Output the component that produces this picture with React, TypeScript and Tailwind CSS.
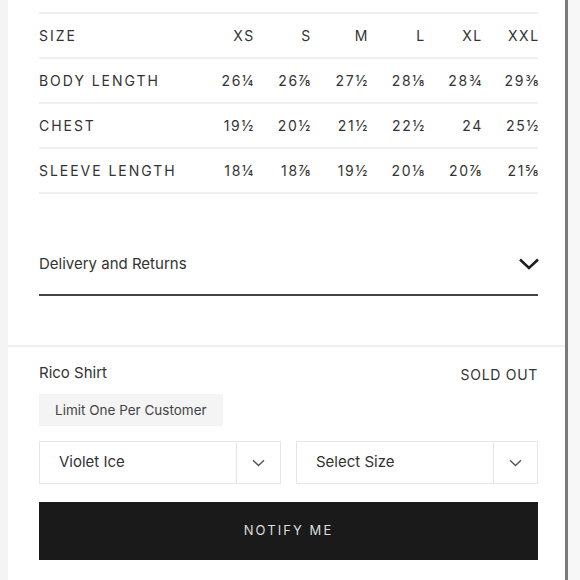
import { ReactNode } from 'react';

const sizes = ['XS', 'S', 'M', 'L', 'XL', 'XXL'];

const rows: { label: string; values: string[] }[] = [
    { label: 'Body Length', values: ['26¼', '26⅞', '27½', '28⅛', '28¾', '29⅜'] },
    { label: 'Chest', values: ['19½', '20½', '21½', '22½', '24', '25½'] },
    { label: 'Sleeve Length', values: ['18¼', '18⅞', '19½', '20⅛', '20⅞', '21⅝'] },
];

// Small chevron used in the select boxes
const SmallChevron = () => (
    <svg width="13" height="8" viewBox="0 0 13 8" fill="none">
        <path d="M1 1.2L6.5 6.5L12 1.2" stroke="#555" strokeWidth="1.4" />
    </svg>
);

function TableRow({ label, cells }: { label: string; cells: ReactNode[] }) {
    return (
        <div className="grid h-[45px] grid-cols-[1fr_repeat(6,57px)] items-center border-b-2 border-[#efefef] text-[14px] uppercase tracking-[0.14em] text-[#333]">
            <span>{label}</span>
            {cells.map((c, i) => (
                <span key={i} className="text-right -mr-[0.14em] tracking-[0.12em]">
                    {c}
                </span>
            ))}
        </div>
    );
}

function SelectBox({ value }: { value: string }) {
    return (
        <div className="flex h-[43px] flex-1 border border-[#e6e6e6] bg-white">
            <div className="flex flex-1 items-center pl-[19px] text-[15px] text-[#333]">{value}</div>
            <div className="flex w-[44px] items-center justify-center border-l border-[#e6e6e6]">
                <SmallChevron />
            </div>
        </div>
    );
}

export default function App() {
    return (
        <main
            className="flex h-[580px] w-[580px] overflow-hidden bg-white"
            style={{ fontFamily: 'Inter, "Liberation Sans", sans-serif' }}
        >
            {/* left gutter */}
            <div className="w-[8px] bg-[#f4f4f4]" />

            {/* panel */}
            <div className="flex w-[557px] flex-col bg-white">
                <div className="pl-[31px] pr-[27px] pt-[12px]">
                    {/* Size chart */}
                    <div className="border-t-2 border-[#efefef]">
                        <TableRow label="Size" cells={sizes} />
                        {rows.map((r) => (
                            <TableRow key={r.label} label={r.label} cells={r.values} />
                        ))}
                    </div>

                    {/* Delivery accordion */}
                    <div className="mt-[56px] border-b-2 border-[#444] pb-[16px]">
                        <div className="flex h-[28px] items-center justify-between">
                            <span className="text-[15px] text-[#333]">Delivery and Returns</span>
                            <svg width="22" height="14" viewBox="0 0 22 14" fill="none" className="mr-[-2px]">
                                <path d="M2 2.5L11 11L20 2.5" stroke="#1f1f1f" strokeWidth="2.6" />
                            </svg>
                        </div>
                    </div>
                </div>

                {/* Purchase area */}
                <div className="mt-[49px] border-t-2 border-[#efefef] pl-[31px] pr-[27px] pt-[14px]">
                    <div className="flex items-center justify-between">
                        <span className="text-[15px] text-[#333]">Rico Shirt</span>
                        <span className="mt-[3px] text-[14px] uppercase tracking-[0.05em] text-[#333]">Sold Out</span>
                    </div>
                    <div className="mt-[9px] inline-flex h-[32px] items-center bg-[#f4f4f4] px-[16px] text-[13.5px] text-[#444]">
                        Limit One Per Customer
                    </div>
                    <div className="mt-[15px] flex gap-[15px]">
                        <SelectBox value="Violet Ice" />
                        <SelectBox value="Select Size" />
                    </div>
                    <button className="mt-[18px] flex h-[58px] w-full items-center justify-center bg-[#1a1a1a] text-[13px] uppercase tracking-[0.16em] text-[#dcdcdc]">
                        Notify Me
                    </button>
                </div>
            </div>

            {/* scrollbar edge */}
            <div className="w-[3px] bg-[#7a7a7a]" />
            <div className="flex-1 bg-[#f7f7f7]" />
        </main>
    );
}
